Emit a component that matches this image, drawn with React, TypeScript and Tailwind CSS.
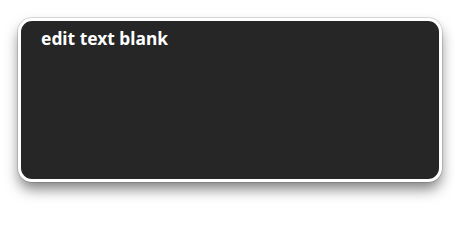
export default function App() {
  return (
    <div className="w-[455px] h-[210px] bg-white pt-[18px] pl-[18px]">
      <div className="w-[424px] h-[164px] rounded-[14px] border-[3px] border-white bg-[#262626] px-[20px] pt-[5px] shadow-[0_0_0_1px_rgba(0,0,0,0.12),0_8px_14px_-1px_rgba(0,0,0,0.5)]">
        <div className="font-['Noto_Sans','Open_Sans',sans-serif] text-white font-bold text-[17.4px] leading-[24px]">
          edit text blank
        </div>
      </div>
    </div>
  );
}
